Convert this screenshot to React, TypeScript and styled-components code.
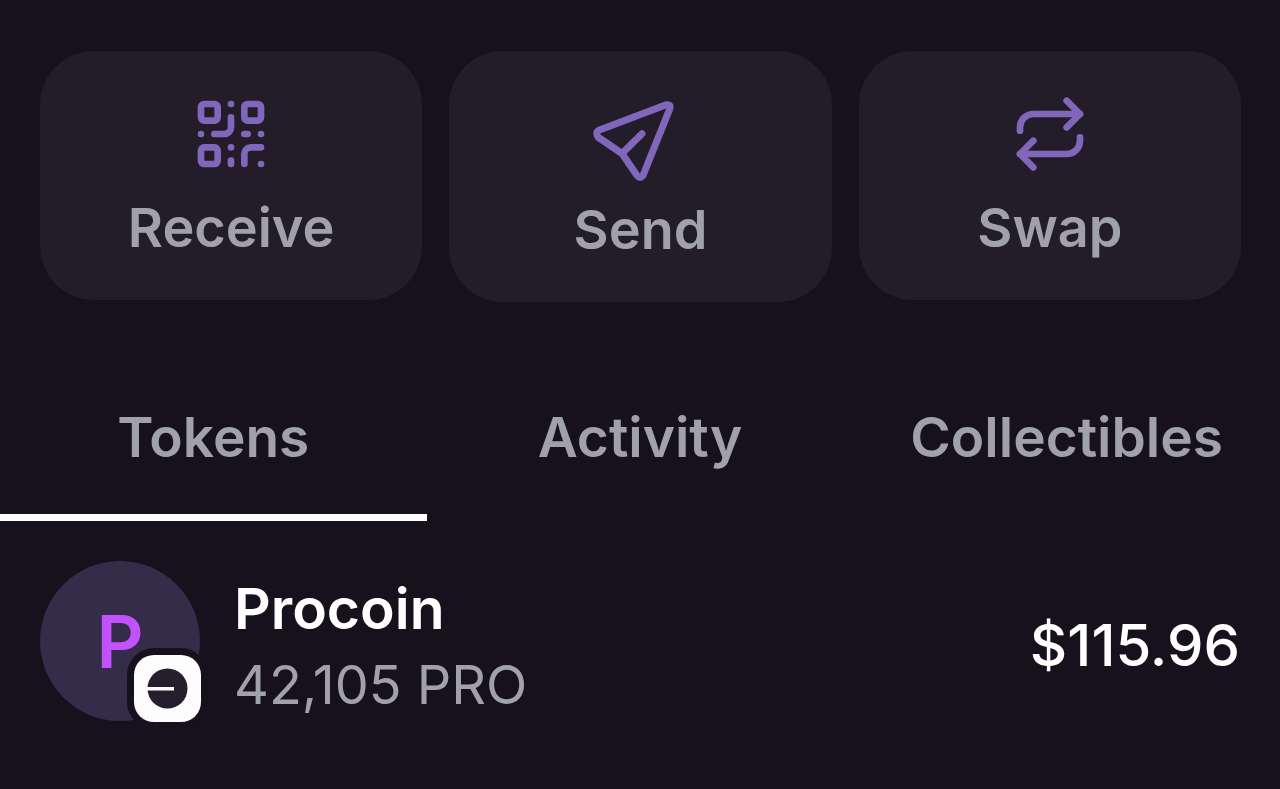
import React, { useState } from "react";
import styled, { createGlobalStyle } from "styled-components";
import { QrCode, Repeat } from "lucide-react";

const GlobalStyle = createGlobalStyle`
  *, *::before, *::after { box-sizing: border-box; }
  body {
    margin: 0;
    background: #17111e;
    font-family: Inter, "Liberation Sans", sans-serif;
  }
  button { font: inherit; border: 0; margin: 0; cursor: pointer; }
`;

const Wallet = styled.main`
  display: flex;
  flex-direction: column;
  padding-top: 51px;
`;

const Actions = styled.div`
  display: grid;
  grid-template-columns: repeat(3, 1fr);
  align-items: start;
  gap: 27px;
  padding: 0 39px 0 40px;
`;

const ActionButton = styled.button`
  display: flex;
  flex-direction: column;
  align-items: center;
  gap: 18px;
  padding: 43px 0 36px;
  border-radius: 54px;
  background: #231d29;
  color: #8067bc;
  font-size: 54px;
`;

const Label = styled.span`
  line-height: 72px;
  font-weight: 600;
  color: #a1a1ae;
`;

const PlaneSvg = styled.svg`
  display: block;
  overflow: visible;
`;

const Tabs = styled.div`
  display: grid;
  grid-template-columns: repeat(3, 1fr);
  margin-top: 58px;
`;

const Tab = styled.button<{ $active: boolean }>`
  padding: 41px 0;
  background: transparent;
  border-bottom: 7px solid ${(p) => (p.$active ? "#ffffff" : "transparent")};
  font-size: 55px;
`;

const TokenList = styled.ul`
  list-style: none;
  margin: 0;
  padding: 40px 40px;
`;

const TokenRow = styled.li`
  display: flex;
  align-items: center;
  gap: 34px;
`;

const Avatar = styled.div`
  position: relative;
  display: flex;
  align-items: center;
  justify-content: center;
  align-self: flex-start;
  width: 160px;
  height: 160px;
  border-radius: 50%;
  background: #342c48;
  color: #c252fb;
  font-size: 73px;
  font-weight: 600;
`;

const NetworkBadge = styled.span`
  position: absolute;
  right: -8px;
  bottom: -8px;
  display: flex;
  width: 81px;
  height: 81px;
  border: 7px solid #17111e;
  border-radius: 27px;
  background: #17111e;
`;

const TokenInfo = styled.div`
  flex: 1;
  display: flex;
  flex-direction: column;
  padding: 10px 0 6px;
  line-height: 76px;
`;

const TokenName = styled.span`
  font-size: 57px;
  font-weight: 600;
  color: #ffffff;
`;

const TokenAmount = styled.span`
  font-size: 54px;
  color: #a1a1ae;
`;

const TokenValue = styled.span`
  font-size: 58px;
  line-height: 76px;
  font-weight: 500;
  color: #ffffff;
`;

function PlaneIcon() {
  return (
    <PlaneSvg width="82" height="82" viewBox="0 0 82 82" fill="none" aria-hidden="true">
      <path
        d="M0.5 36 L66.5 11 Q72.5 9.500 70.700 15 L44 81.500 Q41 85.500 38 81.500 L23 59.500 L-0.500 43.500 Q-4.500 38.500 0.500 36 Z M23 59.500 L43 39.700"
        stroke="currentColor"
        strokeWidth="7"
        strokeLinecap="round"
        strokeLinejoin="round"
      />
    </PlaneSvg>
  );
}

function NetworkIcon() {
  return (
    <svg width="67" height="67" viewBox="0 0 67 67" aria-hidden="true">
      <rect width="67" height="67" rx="20" fill="#fdfdfd" />
      <circle cx="33.500" cy="33.500" r="20" fill="#251e2d" />
      <path d="M12 32H40V35.500H12Z" fill="#fdfdfd" />
    </svg>
  );
}

const actions = [
  { label: "Receive", icon: <QrCode size={80} /> },
  { label: "Send", icon: <PlaneIcon /> },
  { label: "Swap", icon: <Repeat size={80} /> },
];

const tabs = ["Tokens", "Activity", "Collectibles"];

export default function App() {
  const [active, setActive] = useState("Tokens");
  return (
    <>
      <GlobalStyle />
      <Wallet>
        <Actions>
          {actions.map((a) => (
            <ActionButton key={a.label} type="button">
              {a.icon}
              <Label>{a.label}</Label>
            </ActionButton>
          ))}
        </Actions>
        <Tabs role="tablist">
          {tabs.map((t) => (
            <Tab
              key={t}
              type="button"
              role="tab"
              aria-selected={t === active}
              $active={t === active}
              onClick={() => setActive(t)}
            >
              <Label>{t}</Label>
            </Tab>
          ))}
        </Tabs>
        <TokenList>
          <TokenRow>
            <Avatar>
              P
              <NetworkBadge>
                <NetworkIcon />
              </NetworkBadge>
            </Avatar>
            <TokenInfo>
              <TokenName>Procoin</TokenName>
              <TokenAmount>42,105 PRO</TokenAmount>
            </TokenInfo>
            <TokenValue>$115.96</TokenValue>
          </TokenRow>
        </TokenList>
      </Wallet>
    </>
  );
}
